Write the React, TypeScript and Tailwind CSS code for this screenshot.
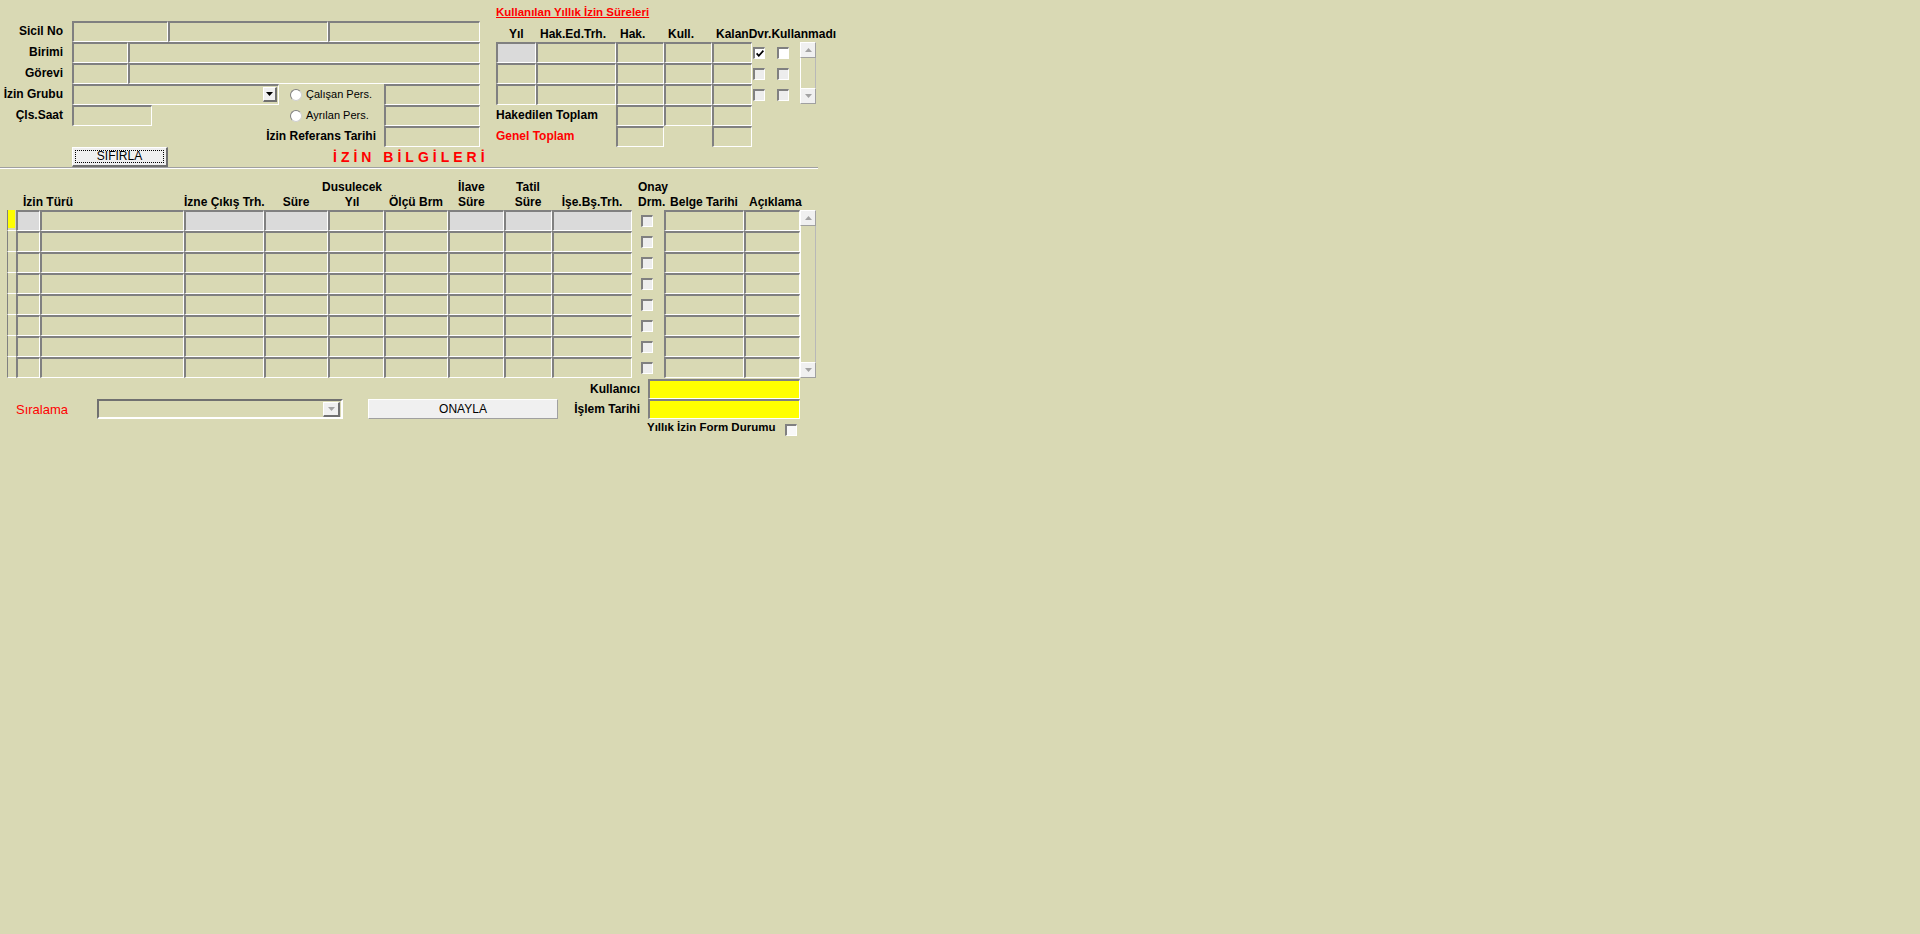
import React from "react";

const font = "font-['Liberation_Sans',Arial,sans-serif]";

// 3D kenarlar (Oracle Forms görünümü)
const inset =
  "border-t-2 border-l-2 border-b border-r border-t-[#808080] border-l-[#808080] border-b-white border-r-white";
const raised =
  "border-t border-l border-b-2 border-r-2 border-t-white border-l-white border-b-[#707070] border-r-[#707070]";
const raisedLight =
  "border-t border-l border-b border-r border-t-white border-l-white border-b-[#a0a0a0] border-r-[#a0a0a0]";

function Field({ className = "" }: { className?: string }) {
  return <div className={`h-[21px] shrink-0 ${inset} ${className}`} />;
}

function Check({ checked = false, bg = "bg-[#ededed]" }: { checked?: boolean; bg?: string }) {
  return (
    <div className={`w-[12px] h-[12px] shrink-0 flex items-center justify-center ${inset} ${bg}`}>
      {checked && (
        <svg width="8" height="7" viewBox="0 0 8 7">
          <path d="M0.6 3.4 L2.8 5.8 L7.4 0.6" stroke="#000" strokeWidth="1.7" fill="none" />
        </svg>
      )}
    </div>
  );
}

function Radio() {
  return (
    <div className="w-[12px] h-[12px] shrink-0 rounded-full bg-white border border-t-[#808080] border-l-[#808080] border-b-[#d0d0d0] border-r-[#d0d0d0]" />
  );
}

function ArrowBtn({ up = false }: { up?: boolean }) {
  return (
    <div className={`h-[16px] shrink-0 bg-[#f0f0f0] flex items-center justify-center ${raisedLight}`}>
      <svg width="7" height="4" viewBox="0 0 7 4">
        <path d={up ? "M0 4 L3.5 0 L7 4Z" : "M0 0 L7 0 L3.5 4Z"} fill="#a3a3a3" />
      </svg>
    </div>
  );
}

function ScrollBar({ className = "" }: { className?: string }) {
  return (
    <div className={`w-[16px] shrink-0 flex flex-col ${className}`}>
      <ArrowBtn up />
      <div className="flex-1 border-l border-r border-l-white border-r-[#b8b8b8]" />
      <ArrowBtn />
    </div>
  );
}

function Label({ children }: { children: React.ReactNode }) {
  return (
    <div className="w-[72px] shrink-0 pr-[9px] text-right text-[12px] font-bold whitespace-nowrap">{children}</div>
  );
}

function PersonelPanel() {
  return (
    <div className="w-[496px] shrink-0 pt-[21px]">
      <div className="flex items-center h-[21px]">
        <Label>Sicil No</Label>
        <Field className="w-[96px]" />
        <Field className="w-[160px]" />
        <Field className="w-[152px]" />
      </div>
      <div className="flex items-center h-[21px]">
        <Label>Birimi</Label>
        <Field className="w-[56px]" />
        <Field className="w-[352px]" />
      </div>
      <div className="flex items-center h-[21px]">
        <Label>Görevi</Label>
        <Field className="w-[56px]" />
        <Field className="w-[352px]" />
      </div>
      <div className="flex items-center h-[21px]">
        <Label>İzin Grubu</Label>
        <div className="w-[218px] shrink-0">
          <div className={`w-[207px] h-[21px] flex items-start justify-end pt-[1px] pr-[1px] ${inset}`}>
            <div className={`w-[14px] h-[15px] bg-[#f0f0f0] flex items-center justify-center ${raised}`}>
              <svg width="7" height="4" viewBox="0 0 7 4">
                <path d="M0 0 L7 0 L3.5 4Z" fill="#000" />
              </svg>
            </div>
          </div>
        </div>
        <div className="w-[94px] shrink-0 flex items-center gap-[4px] whitespace-nowrap">
          <Radio />
          <span>Çalışan Pers.</span>
        </div>
        <Field className="w-[96px]" />
      </div>
      <div className="flex items-center h-[21px]">
        <Label>Çls.Saat</Label>
        <div className="w-[218px] shrink-0">
          <Field className="w-[80px]" />
        </div>
        <div className="w-[94px] shrink-0 flex items-center gap-[4px] whitespace-nowrap">
          <Radio />
          <span>Ayrılan Pers.</span>
        </div>
        <Field className="w-[96px]" />
      </div>
      <div className="flex items-center h-[21px]">
        <div className="w-[384px] shrink-0 pr-[8px] text-right text-[12px] font-bold">İzin Referans Tarihi</div>
        <Field className="w-[96px]" />
      </div>
      <div className="flex items-center h-[20px]">
        <div className="w-[72px] shrink-0" />
        <button className={`w-[96px] h-[20px] shrink-0 bg-[#f0f0f0] p-[2px] text-[12px] ${raised}`}>
          <div className="h-full border border-dotted border-black flex items-center justify-center">SIFIRLA</div>
        </button>
        <div className="ml-[165px] text-[14px] leading-[16px] font-bold text-[#ff0000] tracking-[4px] whitespace-nowrap">
          İZİN BİLGİLERİ
        </div>
      </div>
    </div>
  );
}

const topCols = ["w-[40px]", "w-[80px]", "w-[48px]", "w-[48px]", "w-[40px]"];

function YillikIzinPanel() {
  return (
    <div className="pt-[6px]">
      <div className="h-[13px] text-[11.5px] font-bold text-[#ff0000] underline whitespace-nowrap">
        Kullanılan Yıllık İzin Süreleri
      </div>
      <div className="flex items-center h-[15px] mt-[8px] text-[12px] font-bold whitespace-nowrap">
        <div className="w-[40px] shrink-0 pl-[13px]">Yıl</div>
        <div className="w-[80px] shrink-0 pl-[4px]">Hak.Ed.Trh.</div>
        <div className="w-[48px] shrink-0 pl-[4px]">Hak.</div>
        <div className="w-[48px] shrink-0 pl-[4px]">Kull.</div>
        <div className="pl-[4px]">Kalan</div>
        <div>Dvr.</div>
        <div>Kullanmadı</div>
      </div>
      <div className="flex">
        <div className="w-[304px] shrink-0">
          {[0, 1, 2].map((r) => (
            <div key={r} className="flex items-center h-[21px]">
              {topCols.map((w, i) => (
                <Field key={i} className={`${w} ${r === 0 && i === 0 ? "bg-[#dadada]" : ""}`} />
              ))}
              <div className="ml-[1px]">
                <Check checked={r === 0} bg={r === 0 ? "bg-white" : "bg-[#ededed]"} />
              </div>
              <div className="ml-[12px]">
                <Check bg={r === 0 ? "bg-white" : "bg-[#ededed]"} />
              </div>
            </div>
          ))}
        </div>
        <ScrollBar className="h-[62px]" />
      </div>
      <div className="flex items-center h-[21px]">
        <div className="w-[120px] shrink-0 text-[12px] font-bold">Hakedilen Toplam</div>
        <Field className="w-[48px]" />
        <Field className="w-[48px]" />
        <Field className="w-[40px]" />
      </div>
      <div className="flex items-center h-[21px]">
        <div className="w-[120px] shrink-0 text-[12px] font-bold text-[#ff0000]">Genel Toplam</div>
        <Field className="w-[48px]" />
        <div className="w-[48px] shrink-0" />
        <Field className="w-[40px]" />
      </div>
    </div>
  );
}

function Head({
  w,
  align = "justify-start",
  top,
  bottom,
}: {
  w: string;
  align?: string;
  top?: string;
  bottom?: string;
}) {
  return (
    <div className={`shrink-0 ${w}`}>
      <div className={`h-[15px] leading-[15px] flex ${align}`}>{top}</div>
      <div className={`h-[15px] leading-[15px] flex ${align}`}>{bottom}</div>
    </div>
  );
}

const gridCols = [
  { w: "w-[24px]", gray: true },
  { w: "w-[144px]", gray: false },
  { w: "w-[80px]", gray: true },
  { w: "w-[64px]", gray: true },
  { w: "w-[56px]", gray: false },
  { w: "w-[64px]", gray: false },
  { w: "w-[56px]", gray: true },
  { w: "w-[48px]", gray: true },
  { w: "w-[80px]", gray: true },
];

function IzinGrid() {
  return (
    <div>
      <div className="flex pt-[11px] text-[12px] font-bold whitespace-nowrap">
        <div className="w-[16px] shrink-0" />
        <Head w="w-[24px] pl-[7px]" bottom="İzin Türü" />
        <Head w="w-[144px]" />
        <Head w="w-[80px]" bottom="İzne Çıkış Trh." />
        <Head w="w-[64px]" align="justify-center" bottom="Süre" />
        <Head w="w-[56px] pr-[8px]" align="justify-center" top="Dusulecek" bottom="Yıl" />
        <Head w="w-[64px]" align="justify-center" bottom="Ölçü Brm" />
        <Head w="w-[56px] pl-[10px]" top="İlave" bottom="Süre" />
        <Head w="w-[48px]" align="justify-center" top="Tatil" bottom="Süre" />
        <Head w="w-[80px]" align="justify-center" bottom="İşe.Bş.Trh." />
        <Head w="w-[32px] pl-[6px]" top="Onay" bottom="Drm." />
        <Head w="w-[80px]" align="justify-center" bottom="Belge Tarihi" />
        <Head w="w-[56px] pl-[5px]" bottom="Açıklama" />
      </div>
      <div className="flex pl-[7px]">
        <div>
          {Array.from({ length: 8 }).map((_, r) => (
            <div key={r} className="flex h-[21px]">
              <div className="w-[9px] shrink-0 border-l border-b border-l-[#808080] border-b-white">
                {r === 0 && <div className="w-[7px] h-[18px] bg-[#ffff00]" />}
              </div>
              {gridCols.map((c, i) => (
                <Field key={i} className={`${c.w} ${r === 0 && c.gray ? "bg-[#dadada]" : ""}`} />
              ))}
              <div className="w-[32px] shrink-0 flex items-center pl-[9px]">
                <Check />
              </div>
              <Field className="w-[80px]" />
              <Field className="w-[56px]" />
            </div>
          ))}
        </div>
        <ScrollBar className="h-[168px]" />
      </div>
    </div>
  );
}

function Footer() {
  return (
    <div className="pt-[1px]">
      <div className="flex">
        <div className="w-[648px] shrink-0">
          <div className="h-[20px] flex items-center justify-end pr-[8px] text-[12px] font-bold">Kullanıcı</div>
          <div className="h-[20px] flex items-center">
            <span className="ml-[16px] w-[81px] shrink-0 text-[13px] text-[#ff0000]">Sıralama</span>
            <div className="w-[246px] h-[20px] shrink-0 flex items-center justify-end pr-[1px] border-t-2 border-l-2 border-b-2 border-r-2 border-t-[#707070] border-l-[#707070] border-b-white border-r-white">
              <div className={`w-[17px] h-[15px] bg-[#f0f0f0] flex items-center justify-center ${raised}`}>
                <svg width="7" height="4" viewBox="0 0 7 4">
                  <path d="M0 0 L7 0 L3.5 4Z" fill="#a3a3a3" />
                </svg>
              </div>
            </div>
            <button
              className={`ml-[25px] w-[190px] h-[20px] shrink-0 bg-[#f0f0f0] text-[12px] flex items-center justify-center ${raisedLight}`}
            >
              ONAYLA
            </button>
            <span className="ml-auto pr-[8px] text-[12px] font-bold whitespace-nowrap">İşlem Tarihi</span>
          </div>
        </div>
        <div className="w-[152px] shrink-0">
          <div className={`h-[20px] bg-[#ffff00] ${inset}`} />
          <div className={`h-[20px] bg-[#ffff00] ${inset}`} />
        </div>
      </div>
      <div className="flex items-start pl-[647px] pt-[2px]">
        <span className="text-[11.5px] font-bold whitespace-nowrap">Yıllık İzin Form Durumu</span>
        <div className="ml-[10px] mt-[3px]">
          <Check bg="bg-[#f8f8f8]" />
        </div>
      </div>
    </div>
  );
}

export default function App() {
  return (
    <div className={`min-h-screen bg-[#d9d9b4] text-black text-[11px] leading-[13px] ${font}`}>
      <div className="w-[840px]">
        <div className="flex">
          <PersonelPanel />
          <YillikIzinPanel />
        </div>
        <div className="w-[818px] h-[2px] border-t border-b border-t-[#a0a0a0] border-b-white" />
        <IzinGrid />
        <Footer />
      </div>
    </div>
  );
}
